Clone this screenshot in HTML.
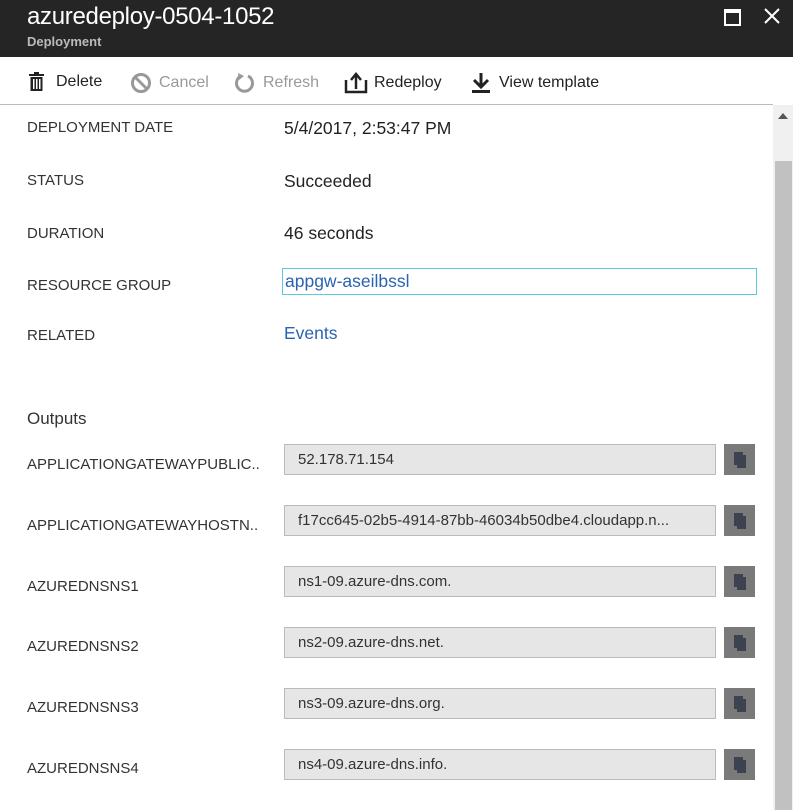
<!DOCTYPE html>
<html><head><style>
body{margin:0;width:793px;height:810px;overflow:hidden;background:#fff;font-family:"Liberation Sans",sans-serif;position:relative}
.hdr{position:absolute;left:0;top:0;width:793px;height:57px;background:#252525;color:#fff}
.t{position:absolute;left:27px;top:3px;font-size:24px;letter-spacing:-0.3px}
.s{position:absolute;left:27px;top:34px;font-size:13px;color:#bbb;font-weight:bold}
.tb{position:absolute;top:72px;font-size:16px;color:#222;display:flex;align-items:center}
.tb.d{color:#999}
.line{position:absolute;left:0;top:104px;width:773px;height:1px;background:#bbb}
.sb{position:absolute;left:773px;top:105px;width:20px;height:705px;background:#f0f0f0}
.th{position:absolute;left:775px;top:161px;width:17px;height:649px;background:#c1c1c1}
.lbl{position:absolute;left:27px;font-size:15px;color:#333}
.val{position:absolute;left:284px;font-size:17.5px;color:#222}
.box{position:absolute;left:284px;width:432px;height:31px;background:#e6e6e6;border:1px solid #bbb;font-size:15px;color:#333;line-height:30px;padding-left:13px;box-sizing:border-box}
.cp{position:absolute;left:724px;width:31px;height:31px;background:#7a7a7a}
.cp::after{content:"";position:absolute;left:13px;top:11px;width:9px;height:13px;background:#3c4250;box-shadow:-3px -3px 0 #3c4250}
</style></head><body>
<div class="hdr"><div class="t">azuredeploy-0504-1052</div><div class="s">Deployment</div>
<div style="position:absolute;left:724px;top:9px;width:13px;height:11px;border:2px solid #fff;border-top-width:4px"></div>
<svg style="position:absolute;left:764px;top:8px" width="16" height="16"><path d="M1 1 L15 15 M15 1 L1 15" stroke="#fff" stroke-width="2"/></svg></div>
<div class="tb" style="left:28px"><svg width="18" height="20" style="margin-right:10px"><rect x="1" y="2" width="15" height="2" fill="#222"/><rect x="6" y="0" width="5" height="2" fill="#222"/><rect x="2.5" y="5" width="12" height="14" fill="#222"/><rect x="5" y="7" width="1.5" height="10" fill="#fff"/><rect x="8" y="7" width="1.5" height="10" fill="#fff"/><rect x="11" y="7" width="1.5" height="10" fill="#fff"/></svg>Delete</div>
<div class="tb d" style="left:130px"><svg width="22" height="22" style="margin-right:7px"><circle cx="11" cy="11" r="8.5" fill="none" stroke="#999" stroke-width="3"/><line x1="5" y1="5" x2="17" y2="17" stroke="#999" stroke-width="3"/></svg>Cancel</div>
<div class="tb d" style="left:234px"><svg width="22" height="22" style="margin-right:7px"><path d="M14 4 A8 8 0 1 1 7 4" fill="none" stroke="#999" stroke-width="3"/><path d="M4 1 L10 4 L5 8Z" fill="#999"/></svg>Refresh</div>
<div class="tb" style="left:344px"><svg width="24" height="22" style="margin-right:6px"><path d="M2 8 V20 H22 V8" fill="none" stroke="#222" stroke-width="2.5"/><line x1="12" y1="3" x2="12" y2="17" stroke="#222" stroke-width="2.5"/><path d="M7 8 L12 2 L17 8" fill="none" stroke="#222" stroke-width="2.5"/></svg>Redeploy</div>
<div class="tb" style="left:471px"><svg width="20" height="22" style="margin-right:8px"><line x1="10" y1="1" x2="10" y2="14" stroke="#222" stroke-width="3"/><path d="M3 8 L10 15 L17 8" fill="none" stroke="#222" stroke-width="3"/><rect x="1" y="18" width="18" height="3" fill="#222"/></svg>View template</div>
<div class="line"></div>
<div class="sb"></div><div class="th"></div>
<div style="position:absolute;left:778px;top:113px;width:0;height:0;border-left:5px solid transparent;border-right:5px solid transparent;border-bottom:6px solid #555"></div>
<div class="lbl" style="top:119px">DEPLOYMENT DATE</div><div class="val" style="top:118px">5/4/2017, 2:53:47 PM</div>
<div class="lbl" style="top:172px">STATUS</div><div class="val" style="top:171px">Succeeded</div>
<div class="lbl" style="top:225px">DURATION</div><div class="val" style="top:223px">46 seconds</div>
<div class="lbl" style="top:277px">RESOURCE GROUP</div>
<div style="position:absolute;left:282px;top:268px;width:471px;height:25px;border:1px solid #5ec7e6;font-size:17.5px;color:#2a64b0;line-height:25px;padding-left:2px">appgw-aseilbssl</div>
<div class="lbl" style="top:327px">RELATED</div><div class="val" style="top:323px;color:#2a64b0">Events</div>
<div class="lbl" style="top:409px;font-size:17px">Outputs</div>
<div class="lbl" style="top:456px">APPLICATIONGATEWAYPUBLIC..</div><div class="box" style="top:444px">52.178.71.154</div><div class="cp" style="top:444px"></div>
<div class="lbl" style="top:517px">APPLICATIONGATEWAYHOSTN..</div><div class="box" style="top:505px">f17cc645-02b5-4914-87bb-46034b50dbe4.cloudapp.n...</div><div class="cp" style="top:505px"></div>
<div class="lbl" style="top:578px">AZUREDNSNS1</div><div class="box" style="top:566px">ns1-09.azure-dns.com.</div><div class="cp" style="top:566px"></div>
<div class="lbl" style="top:638px">AZUREDNSNS2</div><div class="box" style="top:627px">ns2-09.azure-dns.net.</div><div class="cp" style="top:627px"></div>
<div class="lbl" style="top:699px">AZUREDNSNS3</div><div class="box" style="top:688px">ns3-09.azure-dns.org.</div><div class="cp" style="top:688px"></div>
<div class="lbl" style="top:760px">AZUREDNSNS4</div><div class="box" style="top:749px">ns4-09.azure-dns.info.</div><div class="cp" style="top:749px"></div>
</body></html>
